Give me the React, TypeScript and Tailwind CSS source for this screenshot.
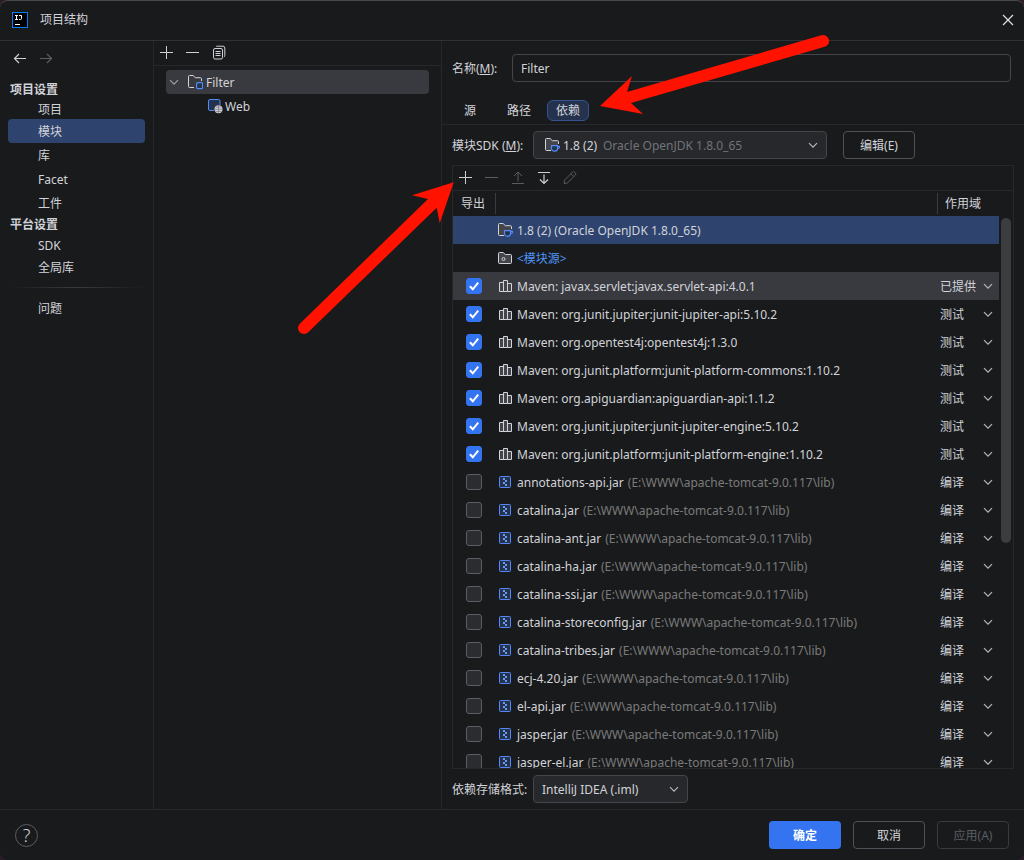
import React, { useState } from "react";

type Scope = "已提供" | "测试" | "编译";

interface Dependency {
  name: string;
  path?: string;
  scope: Scope;
  exported: boolean;
}

const LIB = "(E:\\WWW\\apache-tomcat-9.0.117\\lib)";

const maven = (name: string, scope: Scope): Dependency => ({
  name: `Maven: ${name}`,
  scope,
  exported: true,
});

const jar = (name: string): Dependency => ({
  name,
  path: LIB,
  scope: "编译",
  exported: false,
});

const initialDependencies: Dependency[] = [
  maven("javax.servlet:javax.servlet-api:4.0.1", "已提供"),
  maven("org.junit.jupiter:junit-jupiter-api:5.10.2", "测试"),
  maven("org.opentest4j:opentest4j:1.3.0", "测试"),
  maven("org.junit.platform:junit-platform-commons:1.10.2", "测试"),
  maven("org.apiguardian:apiguardian-api:1.1.2", "测试"),
  maven("org.junit.jupiter:junit-jupiter-engine:5.10.2", "测试"),
  maven("org.junit.platform:junit-platform-engine:1.10.2", "测试"),
  jar("annotations-api.jar"),
  jar("catalina.jar"),
  jar("catalina-ant.jar"),
  jar("catalina-ha.jar"),
  jar("catalina-ssi.jar"),
  jar("catalina-storeconfig.jar"),
  jar("catalina-tribes.jar"),
  jar("ecj-4.20.jar"),
  jar("el-api.jar"),
  jar("jasper.jar"),
  jar("jasper-el.jar"),
];

function Icon({
  children,
  className = "",
}: {
  children: React.ReactNode;
  className?: string;
}) {
  return (
    <svg
      viewBox="0 0 16 16"
      fill="none"
      stroke="currentColor"
      aria-hidden="true"
      className={`size-4 shrink-0 ${className}`}
    >
      {children}
    </svg>
  );
}

const PlusIcon = () => (
  <Icon>
    <path d="M8.5 2v13M2 8.5h13" />
  </Icon>
);

const MinusIcon = () => (
  <Icon>
    <path d="M2 8.5h13" />
  </Icon>
);

const CopyIcon = () => (
  <Icon>
    <rect x="3.5" y="4.5" width="9" height="10.5" rx="1.5" />
    <path d="M6 2.8C6.3 2.3 6.7 2.2 7.3 2.2H13A1.8 1.8 0 0 1 14.8 4v7.5c0 .8-.3 1.2-.9 1.5M5.5 7.5h5M5.5 9.5h5M5.5 11.5h5" />
  </Icon>
);

const ChevronIcon = ({ className = "" }: { className?: string }) => (
  <Icon className={className}>
    <path d="M4 6.2l4 4 4-4" strokeWidth="1.2" />
  </Icon>
);

const FOLDER = "M7 13.5H2.5a1 1 0 0 1-1-1v-10a1 1 0 0 1 1-1h3.6l2.2 2.2h5.2a1 1 0 0 1 1 1V7";

const ModuleIcon = () => (
  <Icon>
    <path d={FOLDER} />
    <rect x="9.6" y="8.6" width="6" height="6" rx="1.2" stroke="#548af7" fill="#25324d" strokeWidth="1.2" />
  </Icon>
);

const WebIcon = () => (
  <Icon>
    <path
      d="M8 12.5H3a1 1 0 0 1-1-1V3a1.5 1.5 0 0 1 1.5-1.5h8A1.5 1.5 0 0 1 13 3v4L8 12.5z"
      fill="#25324d"
      stroke="none"
    />
    <path d="M7 12.5H3A1.5 1.5 0 0 1 1.5 11V3A1.5 1.5 0 0 1 3 1.5h8.5A1.5 1.5 0 0 1 13 3v4" stroke="#548af7" />
    <circle cx="11.5" cy="11.3" r="4" fill="#ced0d6" stroke="none" />
    <path d="M7.5 11.3h8M8.5 9h6M8.5 13.5h6M11.5 7.3v8" stroke="#6b6d73" strokeWidth=".6" />
  </Icon>
);

const SdkIcon = () => (
  <Icon>
    <path d={FOLDER} fill="#43454a" stroke="none" />
    <path d={FOLDER} />
    <path
      d="M7.5 8.6h6v3a2.6 2.6 0 0 1-2.6 2.6h-.8a2.6 2.6 0 0 1-2.6-2.6zM13.5 9.3h1.9c.2 1.6-.6 2.4-2 2.4"
      stroke="#548af7"
      fill="#25324d"
      strokeWidth="1.2"
    />
  </Icon>
);

const SourceIcon = () => (
  <Icon>
    <path
      d="M2.5 2.5h3.6l2.2 2h5.2a1 1 0 0 1 1 1v7a1 1 0 0 1-1 1h-11a1 1 0 0 1-1-1v-9a1 1 0 0 1 1-1z"
      fill="#43454a"
    />
    <circle cx="6.5" cy="9" r="1.5" />
  </Icon>
);

const LibraryIcon = () => (
  <Icon>
    <path d="M2.5 4.5h4v9h-4zM6.5 2.5h4v11h-4zM10.5 5.5h4v8h-4z" fill="#43454a" />
  </Icon>
);

const JarIcon = () => (
  <Icon>
    <rect x="2.5" y="2.5" width="11" height="11" rx="1" stroke="#548af7" fill="#25324d" />
    <path d="M6 4h2v2H6zM8 6h2v2H8zM6 8h2v2H6zM8 10h2v2H8z" fill="#6b9bfa" stroke="none" />
  </Icon>
);

function ToolButton({
  label,
  disabled,
  children,
}: {
  label: string;
  disabled?: boolean;
  children: React.ReactNode;
}) {
  return (
    <button
      type="button"
      aria-label={label}
      disabled={disabled}
      className="text-[#ced0d6] disabled:text-[#5a5d63]"
    >
      {children}
    </button>
  );
}

function SidebarItem({
  children,
  active,
  short,
}: {
  children: React.ReactNode;
  active?: boolean;
  short?: boolean;
}) {
  return (
    <button
      type="button"
      className={`mx-2 flex items-center rounded pt-[2px] pl-[30px] ${short ? "h-5" : "h-6"} ${
        active ? "bg-[#2e436e]" : ""
      }`}
    >
      {children}
    </button>
  );
}

function Sidebar() {
  return (
    <nav className="flex w-[154px] shrink-0 flex-col border-r border-[#27282b]">
      <div className="flex h-10 items-center gap-[10px] pb-[7px] pl-3">
        <ToolButton label="后退">
          <Icon>
            <path d="M14 8.5H2.5M7 4L2.5 8.5 7 13" strokeWidth="1.2" />
          </Icon>
        </ToolButton>
        <ToolButton label="前进" disabled>
          <Icon>
            <path d="M2 8.5h11.5M9 4l4.5 4.5L9 13" strokeWidth="1.2" />
          </Icon>
        </ToolButton>
      </div>
      <h2 className="flex h-[18px] items-center pl-[10px] font-bold">项目设置</h2>
      <SidebarItem short>项目</SidebarItem>
      <SidebarItem active>模块</SidebarItem>
      <SidebarItem>库</SidebarItem>
      <SidebarItem>Facet</SidebarItem>
      <SidebarItem>工件</SidebarItem>
      <h2 className="flex h-5 items-center pl-[10px] font-bold">平台设置</h2>
      <SidebarItem short>SDK</SidebarItem>
      <SidebarItem>全局库</SidebarItem>
      <div className="mx-2 my-2 h-px bg-linear-to-r from-transparent via-[#393b40] to-transparent" />
      <SidebarItem>问题</SidebarItem>
    </nav>
  );
}

function ModuleTree() {
  return (
    <section className="flex w-72 shrink-0 flex-col border-r border-[#27282b]">
      <div className="flex h-[25px] items-center gap-[10px] border-b border-[#27282b] pb-[2px] pl-1">
        <ToolButton label="添加">
          <PlusIcon />
        </ToolButton>
        <ToolButton label="移除">
          <MinusIcon />
        </ToolButton>
        <ToolButton label="复制">
          <CopyIcon />
        </ToolButton>
      </div>
      <ul className="mx-3 mt-1">
        <li>
          <button type="button" className="flex h-6 w-full items-center rounded bg-[#393a3f]">
            <ChevronIcon className="mr-[5px] text-[#9da0a8]" />
            <ModuleIcon />
            <span className="ml-[3px] pt-[2px]">Filter</span>
          </button>
        </li>
        <li>
          <button type="button" className="flex h-6 w-full items-center pl-[41px]">
            <WebIcon />
            <span className="ml-[2px] pt-[2px]">Web</span>
          </button>
        </li>
      </ul>
    </section>
  );
}

function DependencyRow({
  item,
  highlighted,
  onChange,
}: {
  item: Dependency;
  highlighted: boolean;
  onChange: (next: Dependency) => void;
}) {
  return (
    <tr className={`h-7 ${highlighted ? "bg-[#393a3f]" : ""}`}>
      <td className="pl-[13px]">
        <span className="relative block size-4">
          <input
            type="checkbox"
            aria-label={item.name}
            checked={item.exported}
            onChange={(e) => onChange({ ...item, exported: e.target.checked })}
            className="peer block size-4 appearance-none rounded-[3px] border border-[#5a5d63] bg-[#2b2c30] checked:border-[#3574f0] checked:bg-[#3574f0]"
          />
          <Icon className="pointer-events-none absolute inset-0 hidden text-white peer-checked:block">
            <path d="M3.8 8.3l3 3 5.4-6.6" strokeWidth="2" />
          </Icon>
        </span>
      </td>
      <td className="pl-px">
        <div className="flex items-center whitespace-nowrap">
          {item.path ? <JarIcon /> : <LibraryIcon />}
          <span className="ml-1 pt-[2px]">{item.name}</span>
          {item.path && <span className="ml-1 pt-[2px] text-[#7a7a7a]">{item.path}</span>}
        </div>
      </td>
      <td>
        <div className="relative">
          <select
            aria-label={`${item.name} 作用域`}
            value={item.scope}
            onChange={(e) => onChange({ ...item, scope: e.target.value as Scope })}
            className="block w-full appearance-none bg-transparent pt-[2px] pl-[3px]"
          >
            <option>已提供</option>
            <option>测试</option>
            <option>编译</option>
          </select>
          <ChevronIcon className="pointer-events-none absolute top-px right-[3px] text-[#b4b8bf]" />
        </div>
      </td>
    </tr>
  );
}

function DependencyTable() {
  const [items, setItems] = useState(initialDependencies);

  return (
    <div className="mr-[10px] flex min-h-0 flex-1 flex-col border border-[#27282b]">
      <div className="flex h-[25px] shrink-0 items-center gap-[10px] border-b border-[#27282b] pb-[2px] pl-1">
        <ToolButton label="添加依赖">
          <PlusIcon />
        </ToolButton>
        <ToolButton label="移除依赖" disabled>
          <MinusIcon />
        </ToolButton>
        <ToolButton label="上移" disabled>
          <Icon>
            <path d="M9 12.5V3M5 7l4-4 4 4M3 14.5h12" />
          </Icon>
        </ToolButton>
        <ToolButton label="下移">
          <Icon>
            <path d="M3 3.5h12M9 5.5v9M5 10.5l4 4 4-4" strokeWidth="1.2" />
          </Icon>
        </ToolButton>
        <ToolButton label="编辑依赖" disabled>
          <Icon>
            <path d="M3.5 11.2l8-8.1a1.5 1.5 0 0 1 2.1 0l.8.8a1.5 1.5 0 0 1 0 2.1l-8.1 8L3 14.5zM9.900 4.700l2.900 2.900" />
          </Icon>
        </ToolButton>
      </div>
      <div className="flex min-h-0 flex-1">
        <div className="min-w-0 flex-1 overflow-y-auto [scrollbar-width:none]">
          <table className="w-full table-fixed border-collapse text-left">
            <colgroup>
              <col className="w-[43px]" />
              <col />
              <col className="w-[62px]" />
            </colgroup>
            <thead>
              <tr className="h-[25px]">
                <th className="p-0 font-normal">
                  <div className="flex h-[21px] items-center border-r border-[#393b40] pl-2">导出</div>
                </th>
                <th aria-label="名称" />
                <th className="p-0 font-normal">
                  <div className="flex h-[21px] items-center border-l border-[#393b40] pl-[7px]">作用域</div>
                </th>
              </tr>
            </thead>
            <tbody>
              <tr className="h-7 bg-[#2e436e]">
                <td />
                <td className="pl-px" colSpan={2}>
                  <div className="flex items-center gap-1">
                    <SdkIcon />
                    <span className="pt-[2px]">1.8 (2) (Oracle OpenJDK 1.8.0_65)</span>
                  </div>
                </td>
              </tr>
              <tr className="h-7">
                <td />
                <td className="pl-px" colSpan={2}>
                  <div className="flex items-center gap-1">
                    <SourceIcon />
                    <span className="pt-[2px] text-[#4f94f5]">&lt;模块源&gt;</span>
                  </div>
                </td>
              </tr>
              {items.map((item, index) => (
                <DependencyRow
                  key={item.name}
                  item={item}
                  highlighted={index === 0}
                  onChange={(next) =>
                    setItems((prev) => prev.map((old, i) => (i === index ? next : old)))
                  }
                />
              ))}
            </tbody>
          </table>
        </div>
        <div className="w-[14px] shrink-0 px-[2px] pt-[27px]">
          <div className="h-[59%] rounded-full bg-[#3c3d3f]" />
        </div>
      </div>
    </div>
  );
}

function ModuleEditor() {
  const [name, setName] = useState("Filter");
  const tabs = ["源", "路径", "依赖"];
  const [tab, setTab] = useState("依赖");

  return (
    <section className="flex min-w-0 flex-1 flex-col">
      <div className="flex items-center pt-[13px] pr-[13px] pl-[10px]">
        <label htmlFor="module-name" className="w-[60px] shrink-0 pt-[2px]">
          名称(<u>M</u>):
        </label>
        <input
          id="module-name"
          value={name}
          onChange={(e) => setName(e.target.value)}
          className="h-7 min-w-0 flex-1 rounded border border-[#43454a] bg-transparent px-2 outline-none"
        />
      </div>
      <div
        role="tablist"
        className="mt-4 flex h-[27px] items-center gap-[7px] border-b border-[#27282b] pb-[2px] pl-[7px]"
      >
        {tabs.map((t) => (
          <button
            key={t}
            type="button"
            role="tab"
            aria-selected={t === tab}
            onClick={() => setTab(t)}
            className={`h-[21px] w-[42px] rounded-md border pt-px ${
              t === tab ? "border-[#35538f] bg-[#25324d]" : "border-transparent"
            }`}
          >
            {t}
          </button>
        ))}
      </div>
      <div className="flex min-h-0 flex-1 flex-col pl-[10px]">
        <div className="flex items-center py-[6px]">
          <label htmlFor="module-sdk" className="w-[81px] shrink-0 pt-[2px] whitespace-nowrap">
            模块SDK (<u>M</u>):
          </label>
          <div className="relative w-[294px]">
            <select
              id="module-sdk"
              className="block h-7 w-full appearance-none rounded border border-[#43454a] bg-[#27282b] pt-[2px] pl-[29px]"
            >
              <option>1.8 (2)</option>
            </select>
            <div className="pointer-events-none absolute inset-0 flex items-center pr-[6px] pl-[11px]">
              <SdkIcon />
              <span className="ml-[43px] flex-1 pt-[2px] text-[#6f737a]">Oracle OpenJDK 1.8.0_65</span>
              <ChevronIcon className="text-[#b4b8bf]" />
            </div>
          </div>
          <button type="button" className="ml-4 h-7 w-[72px] rounded border border-[#4e5157] pt-[2px]">
            编辑(E)
          </button>
        </div>
        <DependencyTable />
        <div className="flex items-center py-[6px]">
          <label htmlFor="storage-format" className="w-[81px] shrink-0 pt-[2px]">
            依赖存储格式:
          </label>
          <div className="relative w-[155px]">
            <select
              id="storage-format"
              className="block h-7 w-full appearance-none rounded border border-[#43454a] bg-[#27282b] pt-[2px] pl-2"
            >
              <option>IntelliJ IDEA (.iml)</option>
            </select>
            <ChevronIcon className="pointer-events-none absolute top-[6px] right-[6px] text-[#b4b8bf]" />
          </div>
        </div>
      </div>
    </section>
  );
}

function PointerArrows() {
  return (
    <svg
      width="1024"
      height="860"
      viewBox="0 0 1024 860"
      fill="#ff1200"
      aria-hidden="true"
      className="pointer-events-none absolute top-0 left-0"
    >
      <path d="M600 106L632 76 627 92 821.3 35.2A6 6 0 0 1 824.7 46.8L631 103 643 114z" />
      <path d="M453.7 182.3L412 195.3 428 199 299.8 323.7A6 6 0 0 0 308.2 332.3L436.7 207.7 439.7 223.3z" />
    </svg>
  );
}

export default function App() {
  return (
    <div className="relative h-screen overflow-hidden bg-[#2a1d28] font-['Noto_Sans','Noto_Sans_CJK_SC',sans-serif] text-xs text-[#d1d3d9]">
      <div className="flex h-full flex-col overflow-hidden rounded-lg border-t border-[#4a474d] bg-[#191a1c]">
        <header className="flex h-10 shrink-0 items-center border-b border-[#303134] pr-2 pb-[2px] pl-3">
          <svg viewBox="0 0 16 16" className="size-4" aria-hidden="true">
            <rect x=".5" y=".5" width="15" height="15" fill="#000" stroke="#087cfa" />
            <path d="M3 3.5h3M4.5 3.5v4M3 7.5h3M7 3.5h2.5v3q0 1-1 1H7M3 12.5h5" fill="none" stroke="#fff" />
          </svg>
          <h1 className="ml-3 flex-1">项目结构</h1>
          <button type="button" aria-label="关闭" className="text-[#dfe1e5]">
            <Icon>
              <path d="M3 3l10 10M13 3L3 13" strokeWidth="1.2" />
            </Icon>
          </button>
        </header>
        <main className="flex min-h-0 flex-1">
          <Sidebar />
          <ModuleTree />
          <ModuleEditor />
        </main>
        <footer className="flex h-[51px] shrink-0 items-center gap-3 border-t border-[#27282b] px-[15px]">
          <button
            type="button"
            aria-label="帮助"
            className="mr-auto flex size-[23px] items-center justify-center rounded-full border border-[#5a5d63] text-lg font-light"
          >
            ?
          </button>
          <button type="button" className="h-7 w-[72px] rounded bg-[#3574f0] pt-px font-bold text-white">
            确定
          </button>
          <button type="button" className="h-7 w-[72px] rounded border border-[#4e5157] pt-px">
            取消
          </button>
          <button
            type="button"
            disabled
            className="h-7 w-[72px] rounded border border-[#393b40] pt-px text-[#5a5d63]"
          >
            应用(A)
          </button>
        </footer>
      </div>
      <PointerArrows />
    </div>
  );
}
